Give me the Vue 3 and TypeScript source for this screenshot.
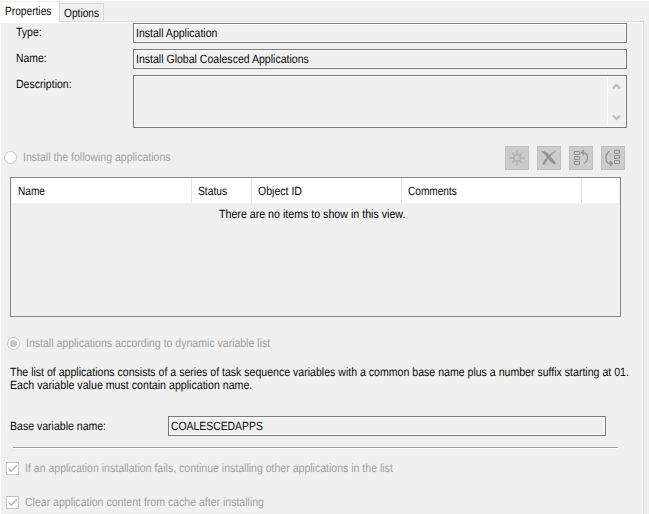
<script setup lang="ts">
import { ref } from 'vue'

interface Column { label: string; cls: string }

const columns: Column[] = [
  { label: 'Name', cls: 'c-name' },
  { label: 'Status', cls: 'c-status' },
  { label: 'Object ID', cls: 'c-object' },
  { label: 'Comments', cls: 'c-comments' },
  { label: '', cls: 'c-rest' },
]
const typeName = ref('Install Application')
const stepName = ref('Install Global Coalesced Applications')
const baseName = ref('COALESCEDAPPS')
</script>

<template>
  <div class="window">
    <div class="tabs">
      <div class="tab active"><span class="tx t-tab">Properties</span></div>
      <div class="tab"><span class="tx t-tab">Options</span></div>
      <div class="tab-line"></div>
    </div>
    <div class="panel">
      <div class="field">
        <label><span class="tx">Type:</span></label>
        <div class="box"><span class="tx">{{ typeName }}</span></div>
      </div>
      <div class="field">
        <label><span class="tx l-name">Name:</span></label>
        <div class="box"><span class="tx">{{ stepName }}</span></div>
      </div>
      <div class="field">
        <label><span class="tx">Description:</span></label>
        <div class="box area">
          <div class="scroll">
            <svg width="9" height="7" viewBox="0 0 9 7"><path d="M1 5.5L4.5 2L8 5.5" /></svg>
            <svg width="9" height="7" viewBox="0 0 9 7"><path d="M1 1.5L4.5 5L8 1.5" /></svg>
          </div>
        </div>
      </div>

      <div class="choice first">
        <i class="radio"></i><span class="tx">Install the following applications</span>
        <div class="tools">
          <div class="tool">
            <svg class="star" width="22" height="22" viewBox="0 0 22 22"><path d="M11 3.500V8M11 14v4.500M3.500 11H8M14 11h4.500M5.800 5.800l3 3M13.200 13.200l3 3M16.200 5.800l-3 3M8.800 13.200l-3 3" /><circle cx="11" cy="11" r="3.200" /></svg>
          </div>
          <div class="tool">
            <svg width="22" height="22" viewBox="0 0 22 22"><path class="cross" d="M3.500 4.500L6.500 4.500Q10 6 12.500 9.500Q14.500 12.500 18 16.500L16 17Q12.500 15 10 11.500Q7.500 7.500 3.500 4.500ZM18 4Q10.500 9 6.500 17.500L4.500 17.500Q8 8 18 4Z" /></svg>
          </div>
          <div class="tool">
            <svg width="22" height="22" viewBox="0 0 22 22"><path d="M4.500 4.500h5v3h-5zM4.500 9.500h5v3h-5zM4.500 14.500h5v3h-5z" /><path class="arrow" d="M14 3L11.500 5.500L14 8M12 5.500h2Q17.500 6.500 17.500 11Q17.500 14.500 14 16.500" /></svg>
          </div>
          <div class="tool">
            <svg width="22" height="22" viewBox="0 0 22 22"><path d="M12.500 3.500h5v3h-5zM12.500 8.500h5v3h-5zM12.500 13.500h5v3h-5z" /><path class="arrow" d="M7.500 4Q4 6.500 4 10.500Q4 15.500 7 16.500H10M8 14L10.500 16.500L8 19" /></svg>
          </div>
        </div>
      </div>

      <div class="list">
        <div class="head">
          <div v-for="c in columns" :key="c.cls" class="col" :class="c.cls"><span class="tx">{{ c.label }}</span></div>
        </div>
        <div class="empty"><span class="tx">There are no items to show in this view.</span></div>
      </div>

      <div class="choice second">
        <i class="radio on"></i><span class="tx">Install applications according to dynamic variable list</span>
      </div>

      <div class="note">
        <div><span class="tx n-one">The list of applications consists of a series of task sequence variables with a common base name plus a number suffix starting at 01.</span></div>
        <div><span class="tx n-two">Each variable value must contain application name.</span></div>
      </div>

      <div class="base">
        <label><span class="tx">Base variable name:</span></label>
        <div class="box"><span class="tx v-base">{{ baseName }}</span></div>
      </div>
      <div class="rule"></div>
      <div class="check">
        <i><svg width="11" height="11" viewBox="0 0 11 11"><path d="M1.500 5.500L4.300 8.300L9.800 2.500" /></svg></i>
        <span class="tx">If an application installation fails, continue installing other applications in the list</span>
      </div>
      <div class="check">
        <i><svg width="11" height="11" viewBox="0 0 11 11"><path d="M1.500 5.500L4.300 8.300L9.800 2.500" /></svg></i>
        <span class="tx">Clear application content from cache after installing</span>
      </div>
    </div>
  </div>
</template>

<style>
body { margin: 0; background: #f0f0f0; overflow: hidden; }
</style>

<style scoped>
* { box-sizing: border-box; }
.window {
  width: 649px; height: 514px; overflow: hidden; background: #f0f0f0;
  border-top: 1px solid #fff; color: #080808;
  font: 12px/14px "Liberation Sans", Arial, sans-serif; white-space: nowrap;
  text-rendering: geometricPrecision;
}
/* Condensed interface lettering */
.tx { display: inline-block; transform: scaleX(.878); transform-origin: 0 50%; }
.t-tab { transform: scaleX(.848); }
.l-name, .v-base { transform: scaleX(.866); }
.n-one { transform: scaleX(.8805); }
.n-two { transform: scaleX(.886); }
.tabs { display: flex; height: 21px; align-items: flex-end; width: 644px; }
.tab { width: 44px; height: 19px; border: 1px solid #d9d9d9; border-left: 0; padding: 2px 0 0 4px; }
.tab.active { width: 60px; height: 21px; background: #fff; border-bottom: 0; border-top-color: #eee; padding: 2px 0 0 5px; }
.tab-line { flex: 1; height: 1px; background: #d9d9d9; }
.panel {
  width: 644px; height: 492px; border-left: 1px solid #fff; border-right: 1px solid #dadada;
  box-shadow: inset -1px 0 #fff, inset 0 1px #fff; padding: 1px 0 0 9px;
}
.field { display: flex; margin-bottom: 6px; padding-left: 6px; }
.field label { width: 117px; padding-top: 2px; }
.box { width: 494px; height: 20px; border: 1px solid #7a7a7a; box-shadow: inset 0 0 0 1px #fff; padding: 2px 0 0 2px; }
.area { height: 53px; display: flex; justify-content: flex-end; padding: 1px; }
.scroll { width: 18px; border-left: 1px solid #fff; display: flex; flex-direction: column; justify-content: space-between; align-items: center; padding: 6px 0 5px; }
.scroll path { fill: none; stroke: #bdbdbd; stroke-width: 2.2; }
.choice { display: flex; align-items: center; color: #a0a0a0; }
.first { margin: 18px 0 0 -6px; height: 24px; }
.first > .radio, .first > .tx { margin-bottom: 2px; }
.radio { width: 13px; height: 13px; border-radius: 50%; border: 1px solid #c4c4c4; background: #fff; margin-right: 6px; flex: none; }
.radio.on { background: radial-gradient(circle, #c6c6c6 0 3.2px, #fff 3.9px); }
.tools { display: flex; gap: 8px; margin-left: auto; margin-right: 18px; }
.tool { width: 24px; height: 24px; border: 1px solid #bfbfbf; background: #cccccc; }
.tool svg { display: block; fill: none; stroke: #929292; stroke-width: 1; }
.tool .arrow { stroke-width: 1.3; }
.tool .star { stroke: #b4b4b4; stroke-width: 1.8; }
.tool .cross { fill: #929292; stroke-width: .4; }
.list { width: 611px; height: 140px; margin-top: 7px; border: 1px solid #828790; }
.head { display: flex; height: 25px; margin: 0 1px; background: #fff; }
.col { border-right: 1px solid #e5e5e5; padding: 6px 0 0 6px; }
.c-name { width: 180px; }
.c-status { width: 60px; }
.c-object { width: 150px; }
.c-comments { width: 180px; }
.c-rest { flex: 1; border: 0; }
.c-name .tx, .c-comments .tx { transform: scaleX(.842); }
.c-status .tx { transform: scaleX(.857); }
.empty { padding: 4px 0 0 208px; color: #000; }
.empty .tx { transform: scaleX(.887); }
.second { margin: 19px 0 0 -3px; height: 14px; }
.note { margin-top: 16px; line-height: 13px; }
.note div { height: 13px; }
.base { display: flex; margin-top: 24px; }
.base label { width: 158px; padding-top: 3px; }
.base .box { width: 438px; }
.rule { width: 605px; height: 2px; margin: 11px 0 0 3px; background: #a0a0a0; border-bottom: 1px solid #fff; }
.check { display: flex; align-items: center; height: 14px; margin: 12px 0 20px -4px; color: #a0a0a0; }
.check i { width: 13px; height: 13px; border: 1px solid #c4c4c4; background: #fff; margin-right: 6px; flex: none; }
.check svg { display: block; fill: none; stroke: #b4b4b4; stroke-width: 1.4; }
</style>
